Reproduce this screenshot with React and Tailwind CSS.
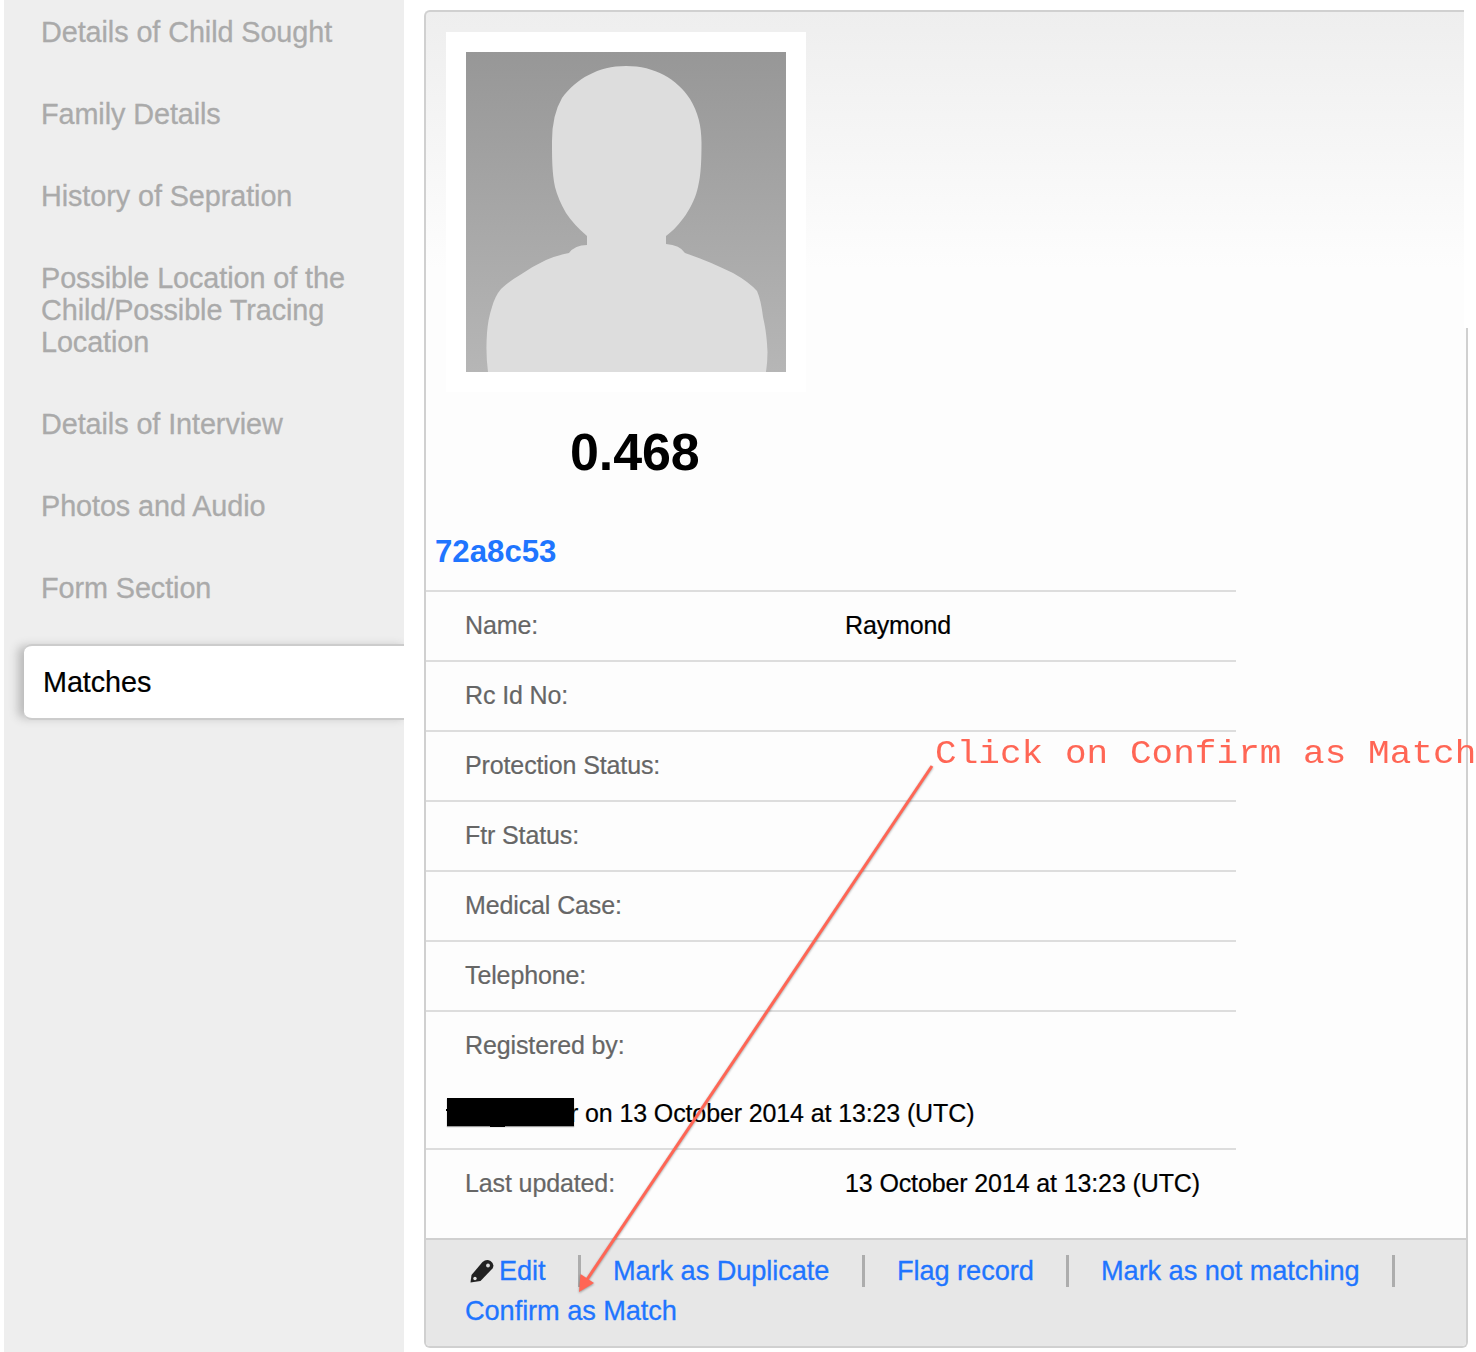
const links = [
  'Details of Child Sought',
  'Family Details',
  'History of Sepration',
  'Possible Location of the Child/Possible Tracing Location',
  'Details of Interview',
  'Photos and Audio',
  'Form Section',
];

const fields = [
  ['Name:', 'Raymond'],
  ['Rc Id No:', ''],
  ['Protection Status:', ''],
  ['Ftr Status:', ''],
  ['Medical Case:', ''],
  ['Telephone:', ''],
];

function Sidebar() {
  return (
    <nav className="h-full w-[400px] shrink-0 overflow-hidden bg-[#eeeeee] text-[28.8px] leading-[32px] tracking-[-0.08px] text-[#aaaaaa] [-webkit-text-stroke:0.3px_#aaaaaa]">
      <ul className="flex flex-col gap-[50px] pt-4 pr-[50px] pl-[37px]">
        {links.map((label) => (
          <li key={label}>{label}</li>
        ))}
      </ul>
      <div className="mt-[40px] ml-[20px] flex h-[76px] w-[390px] items-center rounded-[8px] border-y-2 border-[#cccccc] bg-white pl-[19px] text-black shadow-[-8px_0_10px_-2px_#bbbbbb] [-webkit-text-stroke:0.2px_black]">
        Matches
      </div>
    </nav>
  );
}

function Avatar() {
  return (
    <div className="relative z-10 ml-5 h-[360px] w-[360px] bg-white p-5">
      <svg viewBox="0 0 320 320" className="block h-[320px] w-[320px]">
        <defs>
          <linearGradient id="shade" x1="0" y1="0" x2="0" y2="1">
            <stop offset="0" stopColor="#979797" />
            <stop offset="1" stopColor="#b6b6b6" />
          </linearGradient>
        </defs>
        <rect width="320" height="320" fill="url(#shade)" />
        <path
          fill="#dddddd"
          d="M160 14C189 14 211 27 224 47C232 60 235.500 74 235.500 91C235.500 108 235 123 232 135C228 154 214 174 200 184V192Q214 193 219 201C236 207 251 213 267 221Q283 230 291 239Q295 248 297 265C300 278 301 288 301.500 300Q301.500 310 300 320H22Q19.500 302 21 281Q22 267 26 255Q29 244 35 237Q42 230 54 223Q67 214 80 208Q92 203 103 201Q109 193 121 193V184Q108 173 100 161Q92 147 89 135C86 120 86 106 86 89Q86 63 96 46C110 27 132 14 160 14Z"
        />
      </svg>
    </div>
  );
}

function Pencil() {
  return (
    <svg viewBox="0 0 24 24" className="mr-[5px] ml-[5px] h-6 w-6">
      <path d="M.5 23.500L1.500 16L12.500 3Q16.500-.5 20.500 2Q25 5 22.500 9.500L10.500 22Z" fill="#222" />
      <circle cx="18" cy="6.500" r="1.900" fill="#ddd" />
      <circle cx="5" cy="19.500" r="1.700" fill="#e4e4e4" />
    </svg>
  );
}

const Divider = () => <span className="h-8 w-[3px] shrink-0 bg-[#adadad]" />;

function Actions() {
  return (
    <footer className="h-[108px] border-t-2 border-[#d0d0d0] bg-[#e7e7e7] pt-[11px] pl-[39px] text-[27.2px] leading-[40px] tracking-[-0.07px] whitespace-nowrap text-[#1f75ff] [-webkit-text-stroke:0.3px_#1f75ff]">
      <div className="flex h-10 items-center">
        <a className="flex w-[113px] items-center"><Pencil />Edit</a>
        <Divider />
        <a className="w-[281px] pl-8">Mark as Duplicate</a>
        <Divider />
        <a className="w-[201px] pl-8">Flag record</a>
        <Divider />
        <a className="w-[323px] pl-8">Mark as not matching</a>
        <Divider />
      </div>
      <a>Confirm as Match</a>
    </footer>
  );
}

function Details() {
  return (
    <dl className="w-[810px] text-[25px] tracking-[-0.12px] [-webkit-text-stroke:0.2px]">
      {fields.map(([name, value]) => (
        <div key={name} className="flex h-[70px] items-center border-t-2 border-[#dddddd] pl-[39px]">
          <dt className="w-[380px] text-[#666666]">{name}</dt>
          <dd>{value}</dd>
        </div>
      ))}
      <div className="h-[138px] border-t-2 border-[#dddddd]">
        <dt className="flex h-[68px] items-center pl-[39px] text-[#666666]">Registered by:</dt>
        <dd className="flex h-[68px] items-center pl-[21px]">
          <span className="relative z-10 mb-1 h-7 w-[127px] bg-black shadow-[0_1px_1px_#999999]">
            <span className="absolute top-[11px] left-[-1px] h-[2px] w-[2px] bg-black" />
            <span className="absolute bottom-[-1px] left-[43px] h-[2px] w-[15px] bg-black" />
          </span>
          <span className="-ml-[4px]">r on 13 October 2014 at 13:23 (UTC)</span>
        </dd>
      </div>
      <div className="flex h-[70px] items-center border-t-2 border-[#dddddd] pl-[39px]">
        <dt className="w-[380px] text-[#666666]">Last updated:</dt>
        <dd>13 October 2014 at 13:23 (UTC)</dd>
      </div>
    </dl>
  );
}

function Annotation() {
  return (
    <>
      <svg viewBox="0 0 370 540" className="pointer-events-none absolute top-[760px] left-[570px] h-[540px] w-[370px] drop-shadow-[0px_1px_1px_rgba(0,0,0,0.35)]">
        <path d="M362 6L16 521" stroke="#ff6655" strokeWidth="3" />
        <path d="M9 532L10.500 514L24 523Z" fill="#ff6655" />
      </svg>
      <div className="absolute top-[735px] left-[935px] origin-center scale-y-90 font-['Liberation_Mono',monospace] text-[36px] leading-[40px] tracking-[0.05px] whitespace-nowrap text-[#ff6655]">
        Click on Confirm as Match
      </div>
    </>
  );
}

export default function App() {
  return (
    <main className="relative flex h-[1352px] w-[1476px] overflow-hidden bg-white pl-1 font-['Liberation_Sans',Arial,sans-serif]">
      <Sidebar />
      <section className="mt-[10px] ml-5 h-[1338px] w-[1044px]">
        <div className="h-[318px] w-[1040px] rounded-tl-[6px] border-t-2 border-l-2 border-[#d0d0d0] bg-[#fdfdfd] bg-linear-to-b from-[#eeeeee] to-[#fdfdfd] to-[256px] pt-5">
          <Avatar />
        </div>
        <div className="h-[1020px] overflow-hidden rounded-b-[6px] border-x-2 border-b-2 border-[#d0d0d0]">
          <div className="h-[910px] bg-[#fdfdfd] pt-[92px]">
            <p className="ml-[144px] h-[64px] text-[52px] leading-[64px] font-bold tracking-[-0.1px]">0.468</p>
            <p className="mt-[48px] ml-[9px] h-[58px] text-[31.2px] leading-[40px] font-bold text-[#1f75ff]">72a8c53</p>
            <Details />
          </div>
          <Actions />
        </div>
      </section>
      <Annotation />
    </main>
  );
}
